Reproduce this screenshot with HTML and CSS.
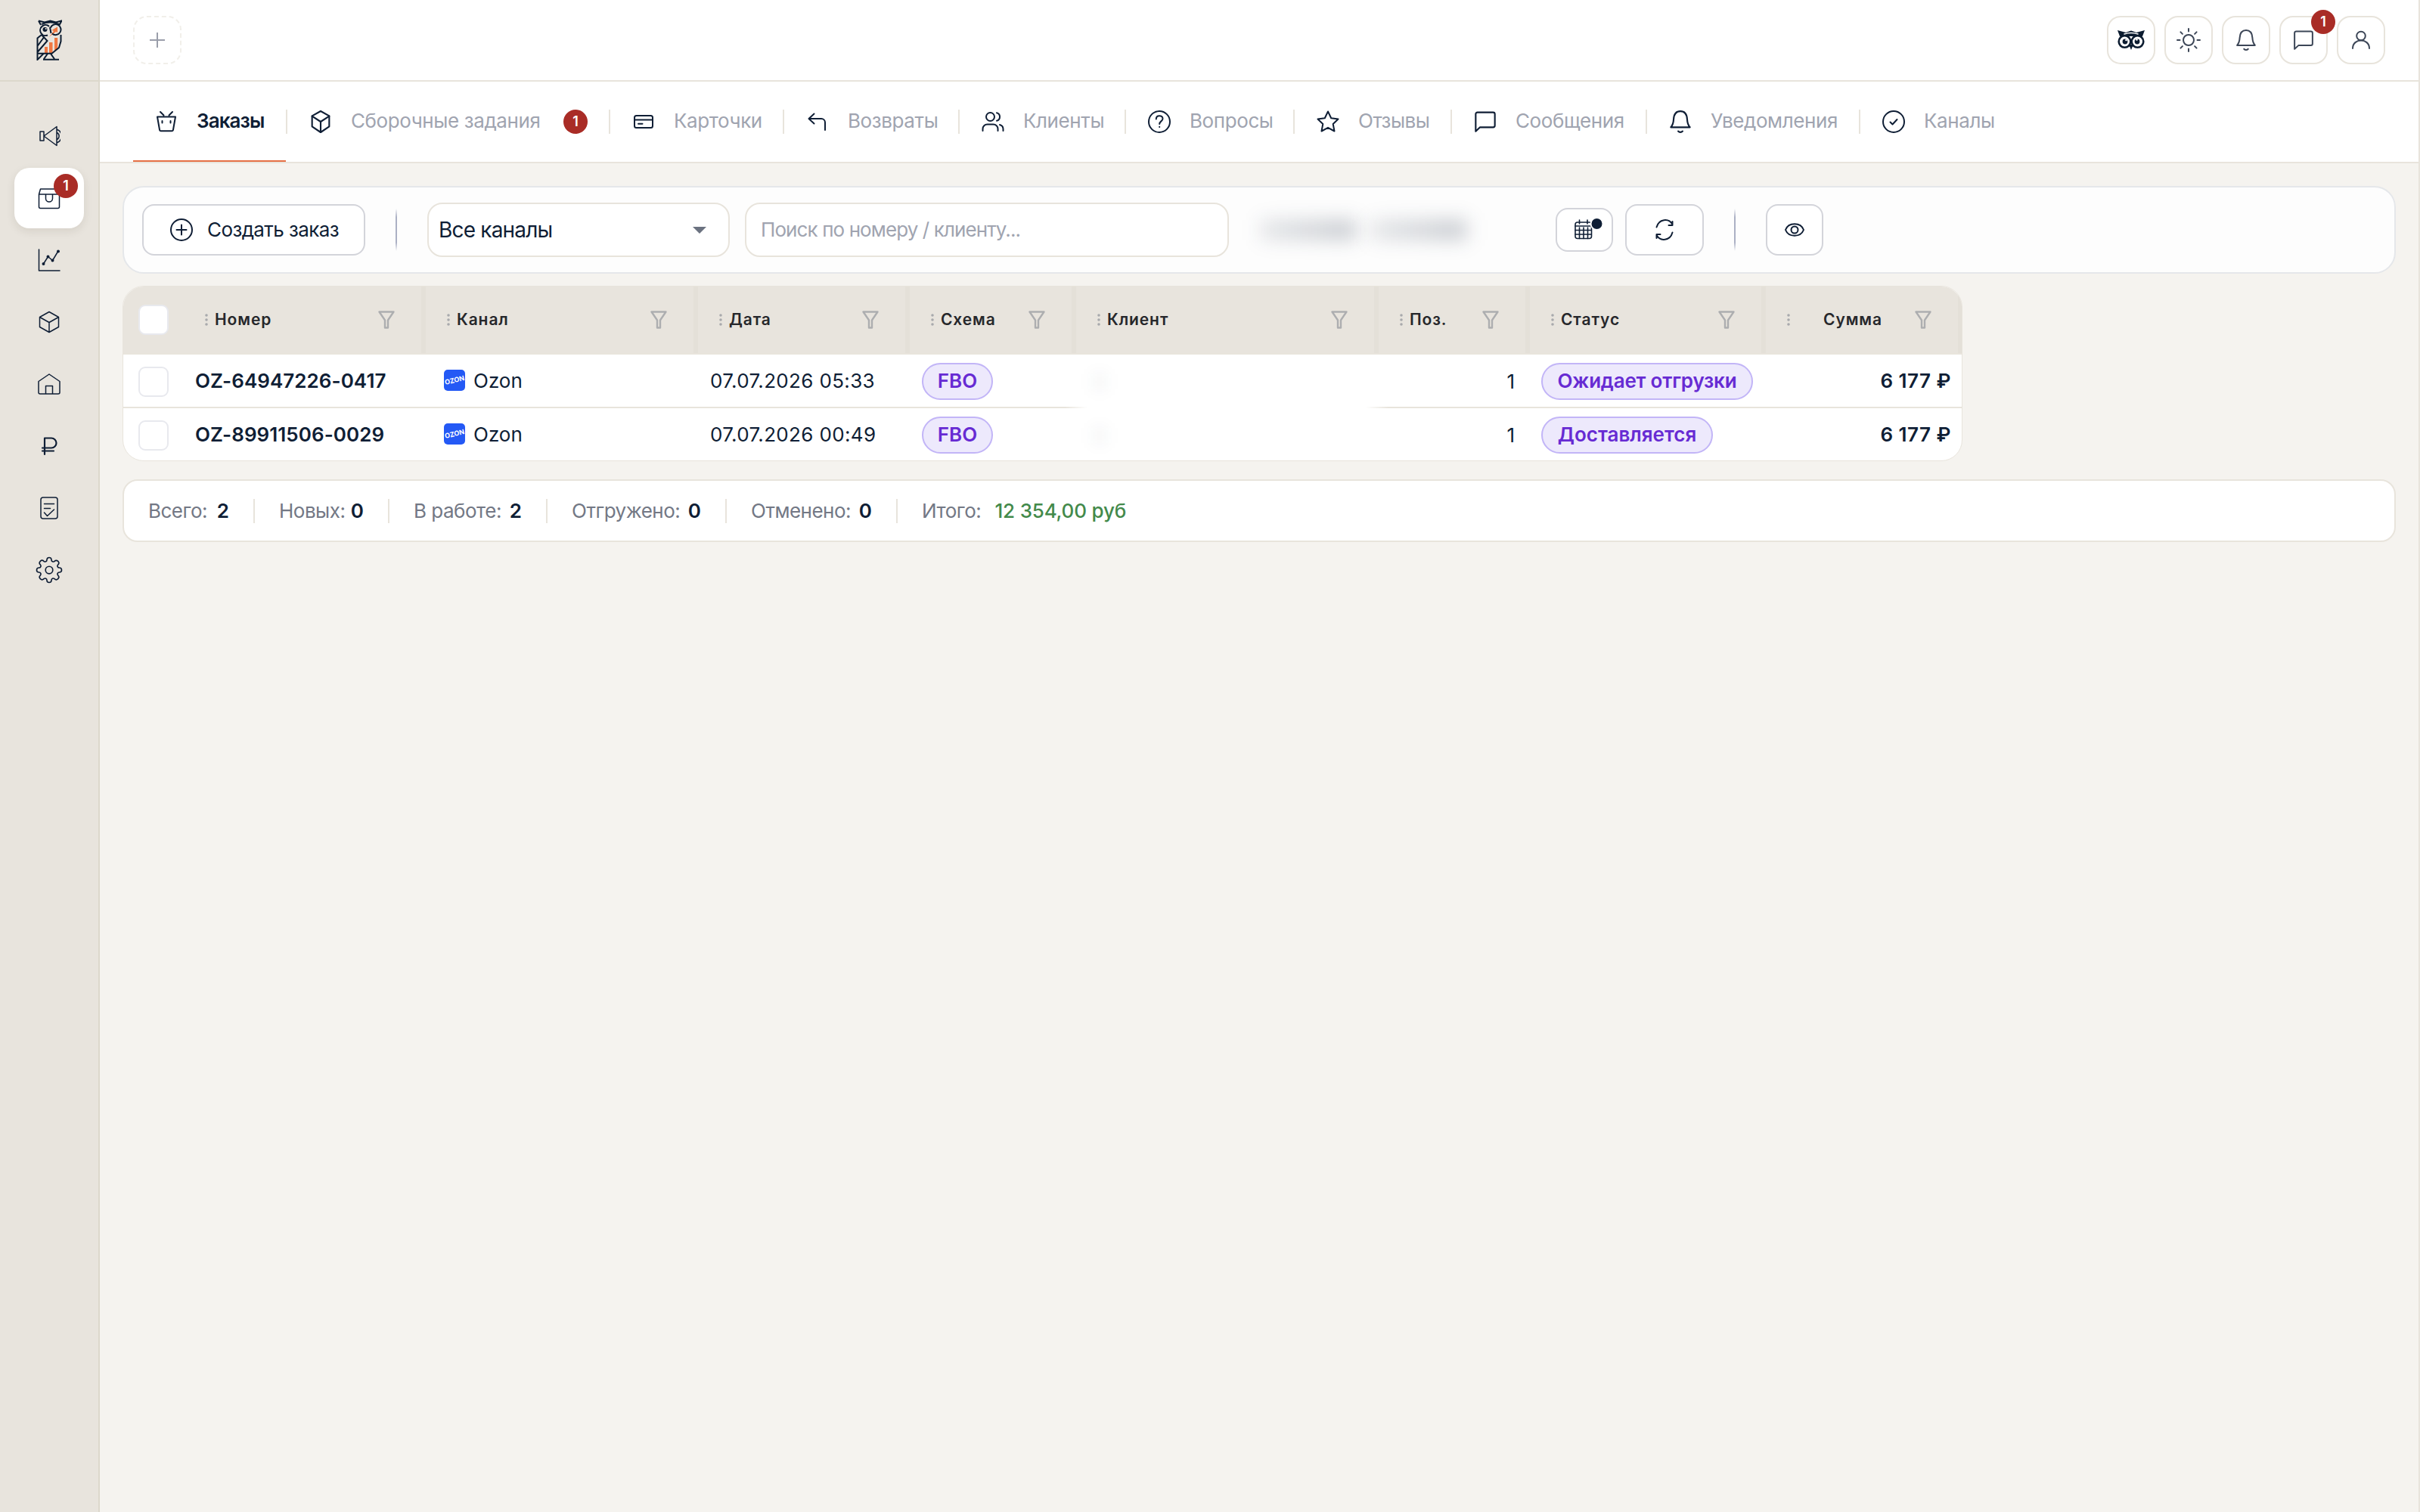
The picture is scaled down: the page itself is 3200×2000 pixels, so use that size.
FILE: index.html
```
<!DOCTYPE html>
<html lang="ru">
<head>
	<meta charset="UTF-8">
	<title>Заказы</title>
	<link rel="stylesheet" href="styles.css">
</head>
<body>
	<svg class="defs">
		<symbol id="i-box" viewBox="0 0 24 24"><path d="M12 1.500l8.500 4.800v10.400L12 22.500l-8.500-5.800V6.300z"/><path d="M3.500 6.500l8.500 5.500 8.500-5.500M12 12v10"/></symbol>
		<symbol id="i-msg" viewBox="0 0 24 24"><path d="M2.500 21.500v-17a1.800 1.800 0 0 1 1.800-1.800h15.400a1.800 1.800 0 0 1 1.800 1.800v11.200a1.800 1.800 0 0 1-1.800 1.800H6.800z"/></symbol>
		<symbol id="i-bell" viewBox="0 0 24 24"><path d="M2.500 17.500c2-2 2.600-4.500 2.800-8C5.600 4.500 8 1.600 12 1.600s6.400 2.900 6.700 7.900c.2 3.500.8 6 2.800 8zM9.800 21.400c1.200 1.400 3.200 1.400 4.400 0"/></symbol>
		<symbol id="i-filter" viewBox="0 0 22 24"><path d="M1.500 1.500h19l-7.500 11v10H9v-10z"/></symbol>
		<symbol id="i-dots" viewBox="0 0 4 16"><path d="M2 2v.01M2 8v.01M2 14v.01"/></symbol>
	</svg>
	<div class="app">
		<div class="sidebar">
			<div class="logo">
				<svg viewBox="0 0 34 54" width="34" height="54">
					<path fill="#f07842" d="M11 36h4v8h-4zM17 30h4.500v14H17zM24 24h4.200v14L24 42zM17 23l6-8-2.500-1L28 9.500V17l-2-1-6 4.500z"/>
					<g fill="none" stroke="#0c1c30" stroke-width="2">
						<path d="M15 20.500A7 7 0 1 1 17 9M21 18.500a7 7 0 1 0-2-8"/>
						<path d="M3 1.500l3 5.500M3 1.500l8 2 7.500-2 7.500 2 7.500-2-3 5.500M7 6q11.500-5 23 0M18 10l1.500 8"/>
						<path d="M7 20l-5.500 4.500v28.500l8-8M7 20l7.500 8-13 15M9.500 24l-8 11M32.500 20v8.500L30 37l-9.500 7.700H1.500"/>
						<path d="M9 52.700h21M15 45l-5 7M19 45l5 7"/>
					</g>
					<circle cx="11.500" cy="13" r="3" fill="#0c1c30"/>
					<circle cx="12.700" cy="12" r="1" fill="#e8e4dd"/>
				</svg>
			</div>
			<div class="menu">
				<div class="item"><svg viewBox="0 0 30 30"><path d="M3 9h5v12H3zM8 15L25 2.500v25zM26 6.500c7 3 7 14 0 17M25.500 10.500c3.500 2 3.500 7 0 9"/></svg></div>
				<div class="item active"><svg viewBox="0 0 30 30"><path d="M1.500 10h27v16.500a2 2 0 0 1-2 2h-23a2 2 0 0 1-2-2zM1.500 10l2-7h23l2 7M10.500 10v5.500a4.500 4.500 0 0 0 9 0V10"/></svg><span class="badge">1</span></div>
				<div class="item"><svg viewBox="0 0 30 30"><path d="M1.500 1v28H29M7.500 20l6-9.500 6 5L27 3"/><path class="fill" d="M5.500 20a2 2 0 1 0 4 0 2 2 0 1 0-4 0M11.500 10.500a2 2 0 1 0 4 0 2 2 0 1 0-4 0M17.500 15.500a2 2 0 1 0 4 0 2 2 0 1 0-4 0M25 3.500a2 2 0 1 0 4 0 2 2 0 1 0-4 0"/></svg></div>
				<div class="item"><svg viewBox="0 0 30 30"><path d="M15 1.500l12.500 7v13L15 28.500l-12.500-7v-13zM2.500 8.500l12.500 7 12.500-7M15 15.500v13"/></svg></div>
				<div class="item"><svg viewBox="0 0 30 30"><path d="M15 2L29 11.500V26a2 2 0 0 1-2 2H3a2 2 0 0 1-2-2V11.500zM10.500 28V17.500h9V28"/></svg></div>
				<div class="item rub"><svg viewBox="0 0 30 30"><path d="M9 26V4.500h9a6.500 6.500 0 0 1 0 13H6M6 21.500h15"/></svg></div>
				<div class="item"><svg viewBox="0 0 30 30"><rect x="4" y="1" width="22" height="28" rx="3"/><path d="M8.500 9.500h13M8.500 15.500h8M8.500 21l4 4.500 9-8.500"/></svg></div>
				<div class="item gear"><svg viewBox="0 0 24 24"><circle cx="12" cy="12" r="3.200"/><path d="M12 1a2 2 0 0 1 2 2c0 1.500 1.500 2.200 2.700 1.200a2 2 0 0 1 3.100 3.100c-1 1.200-.3 2.700 1.200 2.700a2 2 0 0 1 0 4c-1.500 0-2.200 1.500-1.200 2.700a2 2 0 0 1-3.100 3.100c-1.200-1-2.700-.3-2.700 1.200a2 2 0 0 1-4 0c0-1.500-1.500-2.200-2.700-1.200a2 2 0 0 1-3.100-3.100C5.200 15.500 4.500 14 3 14a2 2 0 0 1 0-4c1.500 0 2.200-1.500 1.200-2.700a2 2 0 0 1 3.100-3.100C8.500 5.200 10 4.500 10 3a2 2 0 0 1 2-2z"/></svg></div>
			</div>
		</div>
		<div class="main">
			<div class="topbar">
				<div class="add"><svg viewBox="0 0 20 20" width="20" height="20"><path d="M10 .5v19M.5 10h19"/></svg></div>
				<div class="actions">
					<div class="act"><svg class="owl" viewBox="0 0 36 26" width="36" height="26">
						<path fill="#0c1c30" d="M0 0l11 3 7-2.500L25 3l11-3-3 8H3z"/>
						<circle cx="9.500" cy="15" r="7.800" fill="#fff" stroke="#0c1c30" stroke-width="2.600"/>
						<circle cx="26.500" cy="15" r="7.800" fill="#fff" stroke="#0c1c30" stroke-width="2.600"/>
						<circle cx="10" cy="15" r="3.400" fill="#0c1c30"/><circle cx="26" cy="15" r="3.400" fill="#0c1c30"/>
						<circle cx="11.500" cy="13" r="1.300" fill="#fff"/><circle cx="25.500" cy="12.500" r="1.300" fill="#fff"/>
						<path fill="#0c1c30" d="M15 19h6l-3 7z"/>
						<path fill="none" stroke="#fff" stroke-width="1.400" d="M9 5q9-3 18 0"/>
					</svg></div>
					<div class="act"><svg viewBox="0 0 32 32" width="32" height="32"><circle cx="16" cy="16" r="7"/><path d="M16 1v3.500M16 27.500V31M1 16h3.500M27.500 16H31M5.400 5.400l2.500 2.500M24.100 24.100l2.500 2.500M5.400 26.600l2.500-2.500M24.100 7.900l2.500-2.500"/></svg></div>
					<div class="act"><svg width="30" height="30"><use href="#i-bell"/></svg></div>
					<div class="act"><svg width="30" height="30"><use href="#i-msg"/></svg><span class="badge">1</span></div>
					<div class="act"><svg viewBox="0 0 30 30" width="30" height="30"><circle cx="15" cy="9.500" r="5.800"/><path d="M4 26c0-14 22-14 22 0"/></svg></div>
				</div>
			</div>
			<div class="tabs">
				<div class="tab t1 on"><svg viewBox="0 0 32 32"><path d="M4 9.500h24l-3 17a2 2 0 0 1-2 1.800H9a2 2 0 0 1-2-1.800zM8 3l4.500 4.500M24 3l-4.500 4.500M10.500 15v2.500M21.500 15v2.500"/></svg><span>Заказы</span></div>
				<div class="tab t2"><svg><use href="#i-box"/></svg><span>Сборочные задания</span><b class="badge">1</b></div>
				<div class="tab t3"><svg viewBox="0 0 32 32"><rect x="4" y="8" width="24" height="16" rx="2.500"/><path d="M4 13.500h24M9 18.700h5.500"/></svg><span>Карточки</span></div>
				<div class="tab t4"><svg viewBox="0 0 32 32"><path d="M11.500 5.500L4.500 12l7 6.500M5 12h16a5 5 0 0 1 5 5v10"/></svg><span>Возвраты</span></div>
				<div class="tab t5"><svg viewBox="0 0 32 32"><circle cx="12.500" cy="9.500" r="5.500"/><path d="M2.500 28v-2.500a6 6 0 0 1 6-6h8a6 6 0 0 1 6 6V28M21 4.200a5.500 5.500 0 0 1 0 10.600M25 20a6 6 0 0 1 4.500 5.500V28"/></svg><span>Клиенты</span></div>
				<div class="tab t6"><svg viewBox="0 0 32 32"><circle cx="16" cy="16" r="14"/><path d="M11.800 12.500c0-6 8.700-5.500 8.700-.5 0 3.300-4.300 3.500-4.300 7M16.200 22.800v.3"/></svg><span>Вопросы</span></div>
				<div class="tab t7"><svg viewBox="0 0 32 32"><path d="M16 2.500l4.200 8.800 9.300 1.200-6.800 6.500 1.800 9.500-8.500-4.700-8.500 4.700 1.800-9.500-6.800-6.500 9.300-1.200z"/></svg><span>Отзывы</span></div>
				<div class="tab t8"><svg><use href="#i-msg"/></svg><span>Сообщения</span></div>
				<div class="tab t9"><svg><use href="#i-bell"/></svg><span>Уведомления</span></div>
				<div class="tab t10"><svg viewBox="0 0 32 32"><circle cx="16" cy="16" r="14"/><path d="M11.500 16.500l3 3 6-6.500"/></svg><span>Каналы</span></div>
			</div>
			<div class="content">
				<div class="toolbar">
					<div class="btn create"><svg viewBox="0 0 32 32" width="32" height="32"><circle cx="16" cy="16" r="14"/><path d="M16 9.500v13M9.500 16h13"/></svg><span>Создать заказ</span></div>
					<div class="line"></div>
					<div class="field select"><span>Все каналы</span><i class="caret"></i></div>
					<div class="field search"><span>Поиск по номеру / клиенту...</span></div>
					<div class="period"><i class="smudge"></i><i class="smudge"></i></div>
					<div class="btn cal"><svg viewBox="0 0 38 32" width="38" height="32"><rect x="1" y="6" width="21.500" height="21.500" rx="3"/><path d="M1 11h21M1 16.500h21M1 22h21M6.500 13v14.500M12 13v14.500M17.500 13v14.500M6.500 3v5M17 3v5"/><circle class="dot" cx="29.500" cy="8" r="8"/></svg></div>
					<div class="btn refresh"><svg viewBox="0 0 32 32" width="32" height="32"><path d="M5.500 12.500c3-11 16-12.500 21-3.500M26.500 5v5H21.500M26.500 19.500c-3 11-16 12.500-21 3.500M5.500 27v-5H10.500"/></svg></div>
					<div class="line"></div>
					<div class="btn eye"><svg viewBox="0 0 28 20" width="28" height="20"><path d="M2 10C6-.3 22-.3 26 10 22 20.300 6 20.300 2 10z"/><circle cx="14" cy="10" r="4.500"/></svg></div>
				</div>
				<div class="table">
					<div class="row head">
						<div class="c ch"><i class="check"></i></div>
						<div class="c h"><svg class="dots"><use href="#i-dots"/></svg><span>Номер</span><svg class="fl"><use href="#i-filter"/></svg></div>
						<div class="c h"><svg class="dots"><use href="#i-dots"/></svg><span>Канал</span><svg class="fl"><use href="#i-filter"/></svg></div>
						<div class="c h"><svg class="dots"><use href="#i-dots"/></svg><span>Дата</span><svg class="fl"><use href="#i-filter"/></svg></div>
						<div class="c h"><svg class="dots"><use href="#i-dots"/></svg><span>Схема</span><svg class="fl"><use href="#i-filter"/></svg></div>
						<div class="c h"><svg class="dots"><use href="#i-dots"/></svg><span>Клиент</span><svg class="fl"><use href="#i-filter"/></svg></div>
						<div class="c h"><svg class="dots"><use href="#i-dots"/></svg><span>Поз.</span><svg class="fl"><use href="#i-filter"/></svg></div>
						<div class="c h"><svg class="dots"><use href="#i-dots"/></svg><span>Статус</span><svg class="fl"><use href="#i-filter"/></svg></div>
						<div class="c h sum"><svg class="dots"><use href="#i-dots"/></svg><span>Сумма</span><svg class="fl"><use href="#i-filter"/></svg></div>
					</div>
					<div class="row">
						<div class="c ch"><i class="check"></i></div>
						<div class="c num"><span>OZ-64947226-0417</span></div>
						<div class="c chan"><i class="ozon"><em>OZON</em></i><span>Ozon</span></div>
						<div class="c date"><span>07.07.2026 05:33</span></div>
						<div class="c scheme"><span class="pill fbo">FBO</span></div>
						<div class="c client"><i></i></div>
						<div class="c pos">1</div>
						<div class="c status"><span class="pill s1">Ожидает отгрузки</span></div>
						<div class="c total"><span>6 177 ₽</span></div>
					</div>
					<div class="row">
						<div class="c ch"><i class="check"></i></div>
						<div class="c num"><span>OZ-89911506-0029</span></div>
						<div class="c chan"><i class="ozon"><em>OZON</em></i><span>Ozon</span></div>
						<div class="c date"><span>07.07.2026 00:49</span></div>
						<div class="c scheme"><span class="pill fbo">FBO</span></div>
						<div class="c client"><i></i></div>
						<div class="c pos">1</div>
						<div class="c status"><span class="pill s2">Доставляется</span></div>
						<div class="c total"><span>6 177 ₽</span></div>
					</div>
				</div>
				<div class="summary">
					<div class="s k1"><span>Всего:</span><b>2</b></div>
					<div class="s k2"><span>Новых:</span><b>0</b></div>
					<div class="s k3"><span>В работе:</span><b>2</b></div>
					<div class="s k4"><span>Отгружено:</span><b>0</b></div>
					<div class="s k5"><span>Отменено:</span><b>0</b></div>
					<div class="s k6"><span>Итого:</span><b class="green">12 354,00 руб</b></div>
				</div>
			</div>
		</div>
	</div>
</body>
</html>
```
FILE: styles.css
```
*{
	box-sizing: border-box;
}
body{
	margin: 0;
	background: #f5f3ef;
	color: #0f1e35;
	font: 26px/36px Inter, "Noto Sans", sans-serif;
}
svg{
	display: block;
	flex: none;
	fill: none;
	stroke: #0f1e35;
	stroke-width: 2;
	stroke-linecap: round;
	stroke-linejoin: round;
}
i, em{
	font-style: normal;
}
.defs{
	display: none;
}
.app{
	display: flex;
	width: 3200px;
	height: 2000px;
	border-right: 2px solid #e8e4dc;
}
.sidebar{
	width: 132px;
	flex: none;
	background: #e8e4dd;
	border-right: 2px solid #dcd8cc;
}
.logo{
	height: 108px;
	padding: 26px 0 0 48px;
	border-bottom: 2px solid #dcd8cc;
}
.logo svg{
	stroke: none;
	stroke-linecap: butt;
	stroke-linejoin: miter;
}
.menu{
	padding: 32px 19px;
	display: flex;
	flex-direction: column;
	gap: 2px;
}
.item{
	position: relative;
	width: 92px;
	height: 80px;
	border-radius: 20px;
	display: flex;
	align-items: center;
	justify-content: center;
}
.item svg{
	width: 30px;
	height: 30px;
	stroke-width: 1.5;
}
.item.rub svg{
	stroke-width: 2.2;
}
.item.gear svg{
	width: 36px;
	height: 36px;
	stroke-width: 1.1;
}
.item .fill{
	fill: #0f1e35;
	stroke: none;
}
.item.active{
	background: #fff;
	box-shadow: 0 4px 12px rgba(60, 50, 30, 0.1);
}
.badge{
	width: 32px;
	height: 32px;
	border-radius: 50%;
	background: #a92c26;
	color: #fff;
	font-size: 18px;
	line-height: 32px;
	font-weight: 600;
	text-align: center;
}
.item .badge{
	position: absolute;
	left: 52px;
	top: 8px;
}
.main{
	flex: 1;
	min-width: 0;
}
.topbar{
	height: 108px;
	padding: 0 44px;
	background: #fff;
	border-bottom: 2px solid #e8e4dc;
	display: flex;
	align-items: center;
	justify-content: space-between;
}
.add, .act{
	width: 64px;
	height: 64px;
	border-radius: 18px;
	border: 2px solid #e8e4dc;
	display: flex;
	align-items: center;
	justify-content: center;
}
.add{
	border: 2px dashed #f1efea;
}
.add svg{
	stroke: #9a9eaa;
}
.actions{
	display: flex;
	gap: 12px;
}
.act{
	position: relative;
}
.act svg{
	stroke: #3c4657;
}
.act .owl{
	stroke: none;
}
.act .badge{
	position: absolute;
	left: 40px;
	top: -10px;
}
.act use, .tab use{
	stroke-width: 1.6;
}
.tabs{
	height: 108px;
	padding-left: 44px;
	background: #fff;
	border-bottom: 2px solid #e8e4dc;
	display: flex;
}
.tab{
	position: relative;
	height: 106px;
	padding-left: 28px;
	color: #a0a4b0;
	letter-spacing: -0.4px;
	white-space: nowrap;
	display: flex;
	align-items: center;
}
.tab svg{
	width: 32px;
	height: 32px;
	margin-right: 24px;
}
.tab span{
	margin-top: -2px;
}
.tab::after{
	content: "";
	height: 32px;
	width: 2px;
	background: #e8e4dc;
	margin-left: auto;
}
.tab:last-child::after{
	display: none;
}
.tab .badge{
	margin-left: auto;
	margin-right: 28px;
	letter-spacing: 0;
}
.t2::after{
	margin-left: 0;
}
.tab.on{
	color: #0f1e35;
	font-weight: 600;
}
.tab.on::before{
	content: "";
	position: absolute;
	left: 0;
	bottom: 0;
	width: 202px;
	height: 2px;
	background: #e56f45;
}
.tab.t1{ width: 204px; letter-spacing: -0.9px; }
.t2{ width: 427px; }
.t3{ width: 230px; }
.t4{ width: 232px; }
.t5{ width: 220px; }
.t6{ width: 223px; }
.tab.t7{ width: 208px; letter-spacing: -0.5px; }
.t8{ width: 258px; }
.t9{ width: 282px; }
.content{
	padding: 30px 30px 0;
}
.toolbar{
	height: 116px;
	border: 2px solid #e5e7ea;
	border-radius: 28px;
	background: #fdfdfd;
	padding-left: 24px;
	display: flex;
	align-items: center;
}
.btn{
	height: 68px;
	flex: none;
	border: 2px solid #d3d4da;
	border-radius: 16px;
	background: #fff;
	display: flex;
	align-items: center;
	justify-content: center;
}
.create{
	width: 295px;
	padding-left: 34px;
	justify-content: flex-start;
}
.create span{
	margin-left: 18px;
	letter-spacing: -0.6px;
}
.line{
	width: 2px;
	height: 56px;
	margin: 0 40px;
	background: linear-gradient(rgba(160, 165, 190, 0), #abb0c4 20%, #abb0c4 80%, rgba(160, 165, 190, 0));
}
.field{
	height: 72px;
	flex: none;
	border: 2px solid #e8e4dc;
	border-radius: 20px;
	background: #fff;
	display: flex;
	align-items: center;
	white-space: nowrap;
}
.select{
	width: 400px;
	margin-right: 20px;
	padding: 0 29px 0 13px;
	justify-content: space-between;
	font-size: 28px;
	letter-spacing: -0.8px;
}
.caret{
	border: 9px solid transparent;
	border-top-color: #6b7280;
	border-bottom: none;
}
.search{
	width: 640px;
	padding-left: 19px;
	color: #a0a4b0;
	letter-spacing: -0.9px;
}
/* hidden date range */
.period{
	width: 432px;
	padding-left: 42px;
	display: flex;
	gap: 20px;
}
.smudge{
	width: 126px;
	height: 26px;
	background: linear-gradient(90deg, rgba(15, 30, 53, 0.11), rgba(15, 30, 53, 0.24));
	filter: blur(13px);
}
.cal{
	width: 76px;
	height: 58px;
	margin-right: 16px;
	padding-left: 12px;
}
.cal svg{
	stroke-width: 1.6;
}
.cal .dot{
	fill: #0f1e35;
	stroke: #fff;
	stroke-width: 2;
}
.refresh{
	width: 104px;
}
.eye{
	width: 76px;
}
.table{
	width: 2433px;
	height: 232px;
	margin-top: 16px;
	border: 1px solid #e8e4dc;
	border-radius: 28px;
	background: #fff;
	overflow: hidden;
}
.row{
	display: grid;
	grid-template-columns: 79px 320px 360px 280px 220px 400px 200px 312px 260px;
	height: 71px;
	border-bottom: 2px solid #e8e4dc;
}
.row:last-child{
	border-bottom: none;
	height: 69px;
}
.head{
	height: 90px;
	background: #e8e4dd;
}
.c{
	display: flex;
	align-items: center;
	min-width: 0;
	white-space: nowrap;
}
.ch{
	padding-left: 20px;
}
.check{
	width: 40px;
	height: 40px;
	border: 2px solid #e8e9ee;
	border-radius: 9px;
	background: #fff;
}
.h{
	margin-right: -1px;
	padding: 0 35px 0 29px;
	border-right: 6px solid #e4e0d8;
	color: #26272b;
	font-size: 21px;
	font-weight: 600;
	letter-spacing: 0.9px;
}
.dots{
	width: 4px;
	height: 16px;
	margin-right: 9px;
	stroke: #a8a9ac;
	stroke-width: 3.6;
}
.fl{
	width: 22px;
	height: 24px;
	margin-left: auto;
	stroke: #adaeb0;
	stroke-width: 2.4;
}
.sum .dots{
	margin-right: 44px;
}
.num span, .chan span, .date span, .total span{
	margin-top: -1px;
}
.num{
	padding-left: 16px;
	font-weight: 600;
	letter-spacing: 0.05px;
}
.chan{
	padding-left: 25px;
	gap: 11px;
}
.ozon{
	width: 28px;
	height: 28px;
	margin-top: -4px;
	border-radius: 5px;
	background: #2459f5;
	overflow: hidden;
	display: flex;
	align-items: center;
	justify-content: center;
}
.ozon em{
	color: #fff;
	font-size: 9px;
	line-height: 10px;
	font-weight: 700;
	transform: rotate(-14deg);
}
.date{
	padding-left: 17px;
	letter-spacing: 0.35px;
}
.scheme{
	padding-left: 17px;
}
.pill{
	height: 49px;
	border: 2px solid #c2b5f7;
	border-radius: 25px;
	background: #ede9fc;
	color: #672bd3;
	font-weight: 600;
	line-height: 44px;
	text-align: center;
}
.fbo{
	width: 94px;
}
.s1{
	width: 280px;
	letter-spacing: -0.2px;
}
.s2{
	width: 227px;
}
.client{
	position: relative;
	height: 71px;
	margin: 0 -14px;
	background: linear-gradient(90deg, rgba(255, 255, 255, 0), #fff 7%, #fff 93%, rgba(255, 255, 255, 0));
}
.client i{
	width: 16px;
	height: 20px;
	margin-left: 38px;
	background: rgba(15, 30, 53, 0.06);
	filter: blur(10px);
}
.pos{
	justify-content: flex-end;
	padding-right: 19px;
}
.status{
	padding-left: 16px;
}
.total{
	justify-content: flex-end;
	padding-right: 14px;
	font-weight: 600;
	letter-spacing: 0.5px;
}
.summary{
	height: 83px;
	margin-top: 24px;
	padding-left: 32px;
	border: 2px solid #e8e4dc;
	border-radius: 20px;
	background: #fff;
	color: #737885;
	display: flex;
	align-items: center;
}
.s{
	display: flex;
	align-items: center;
	justify-content: space-between;
	padding-right: 32px;
	margin-right: 32px;
	height: 32px;
	border-right: 2px solid #e8e4dc;
	letter-spacing: -0.5px;
	white-space: nowrap;
}
.s b{
	color: #0f1e35;
	font-weight: 600;
	letter-spacing: 0;
}
.s .green{
	color: #438a4b;
	font-weight: 500;
	letter-spacing: -0.2px;
}
.k1{ width: 141px; }
.k2{ width: 146px; }
.k3{ width: 177px; }
.k4{ width: 205px; }
.k5{ width: 194px; }
.k6{
	width: 302px;
	border: none;
}
```
